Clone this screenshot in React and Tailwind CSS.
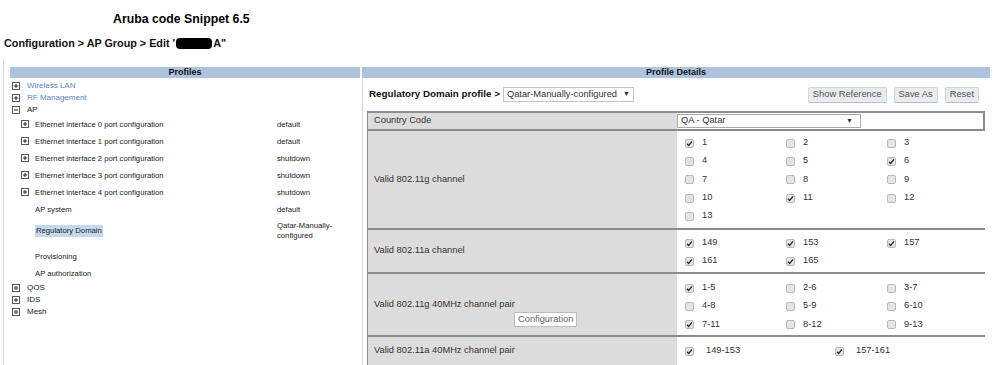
const ui = { fontFamily: '"Liberation Sans", Arial, sans-serif' };

function Expander({ open }) {
  return (
    <span className="inline-flex h-[8px] w-[8px] shrink-0 items-center justify-center border border-[#555] bg-white">
      <svg width="6" height="6" viewBox="0 0 6 6">
        <path d="M1 3h4" stroke="#222" strokeWidth="1" />
        {!open && <path d="M3 1v4" stroke="#222" strokeWidth="1" />}
      </svg>
    </span>
  );
}

function TopItem({ label, open, blue }) {
  return (
    <div className="flex h-[12px] items-center gap-[7px] pl-[2px] text-[8px]">
      <Expander open={open} />
      <span className={blue ? 'text-[#5b86c5]' : 'text-[#222]'}>{label}</span>
    </div>
  );
}

function SubItem({ label, value, expander, h = 'h-[17px]', highlight }) {
  return (
    <div className={`flex items-center ${h}`}>
      <div className="flex w-[267px] items-center pl-[11px]">
        <span className="w-[14px]">{expander && <Expander />}</span>
        <span className={highlight ? 'bg-[#c6d8ee] px-px text-[#222]' : 'text-[#222]'}>{label}</span>
      </div>
      <div className="leading-[10px] text-[#222]">{value}</div>
    </div>
  );
}

function Check({ on }) {
  return (
    <span className="inline-flex h-[9px] w-[9px] shrink-0 items-center justify-center rounded-[2px] border border-[#b9b9b9] bg-[#e4e4e4]">
      {on && (
        <svg width="7" height="7" viewBox="0 0 7 7">
          <path d="M1 3.8l1.6 1.7L6 1.3" fill="none" stroke="#2a2a2a" strokeWidth="1.3" />
        </svg>
      )}
    </span>
  );
}

function Grid({ items, cols = 'grid-cols-[101px_101px_101px]', gap = 'gap-[8px]' }) {
  return (
    <div className={`grid ${cols} pl-[8px]`}>
      {items.map(([label, on]) => (
        <div key={label} className={`flex h-[18.3px] items-center ${gap}`}>
          <Check on={on} />
          <span className="text-[#333]">{label}</span>
        </div>
      ))}
    </div>
  );
}

function Row({ label, h, pt = 'pt-[3px]', children, extra }) {
  return (
    <div className={`flex border-t-2 border-[#8c8c8c] ${h}`}>
      <div className="relative flex w-[309px] shrink-0 items-center bg-[#dcdcdc] pl-[6px] text-[#333]">
        {label}
        {extra}
      </div>
      <div className={`flex-1 bg-white ${pt}`}>{children}</div>
    </div>
  );
}

const gChannels = [
  ['1', true], ['2', false], ['3', false],
  ['4', false], ['5', false], ['6', true],
  ['7', false], ['8', false], ['9', false],
  ['10', false], ['11', true], ['12', false],
  ['13', false],
];
const aChannels = [['149', true], ['153', true], ['157', true], ['161', true], ['165', true]];
const gPairs = [
  ['1-5', true], ['2-6', false], ['3-7', false],
  ['4-8', false], ['5-9', false], ['6-10', false],
  ['7-11', true], ['8-12', false], ['9-13', false],
];
const aPairs = [['149-153', true], ['157-161', true]];

export default function App() {
  return (
    <div className="h-[365px] w-[998px] overflow-hidden bg-white" style={ui}>
      <div className="h-[31px] pl-[113px] pt-[11px] text-[12.3px] font-bold leading-[16px] text-black">
        Aruba code Snippet 6.5
      </div>
      <div className="flex h-[24px] items-center pl-[4px] text-[10.8px] font-bold text-[#111]">
        <span>Configuration &gt; AP Group &gt; Edit '</span>
        <span className="mx-px inline-block h-[11px] w-[36px] rounded-[4px] bg-black" />
        <span>A"</span>
      </div>

      <div className="h-[4px]" />
      <div className="ml-[3px] flex border-l border-[#d8d8d8] pt-[8px]">
        {/* Profiles tree */}
        <div className="w-[356px] shrink-0 pl-[6px] text-[7.7px]">
          <div className="flex h-[11px] items-center justify-center bg-[#adc3de] text-[9px] font-bold text-[#111]">
            Profiles
          </div>
          <div className="pt-[2px]">
            <TopItem label="Wireless LAN" blue />
            <TopItem label="RF Management" blue />
            <TopItem label="AP" open />
            <SubItem label="Ethernet interface 0 port configuration" value="default" expander />
            <SubItem label="Ethernet interface 1 port configuration" value="default" expander />
            <SubItem label="Ethernet interface 2 port configuration" value="shutdown" expander />
            <SubItem label="Ethernet interface 3 port configuration" value="shutdown" expander />
            <SubItem label="Ethernet interface 4 port configuration" value="shutdown" expander />
            <SubItem label="AP system" value="default" />
            <SubItem
              label="Regulatory Domain"
              value={<>Qatar-Manually-<br />configured</>}
              h="h-[26px]"
              highlight
            />
            <div className="h-[4px]" />
            <SubItem label="Provisioning" />
            <SubItem label="AP authorization" />
            <TopItem label="QOS" />
            <TopItem label="IDS" />
            <TopItem label="Mesh" />
          </div>
        </div>

        {/* Profile details */}
        <div className="ml-[2px] w-[628px] shrink-0 text-[9.3px]">
          <div className="flex h-[11px] items-center justify-center bg-[#adc3de] text-[9px] font-bold text-[#111]">
            Profile Details
          </div>
          <div className="border-l border-[#d8d8d8]">
            <div className="flex h-[33px] items-center pl-[6px] pr-[11px]">
              <span className="text-[9.8px] font-bold text-[#111]">Regulatory Domain profile &gt;</span>
              <span className="ml-[3px] flex h-[15px] w-[131px] items-center justify-between border border-[#c4c4c4] px-[3px] text-[#333]">
                Qatar-Manually-configured
                <span className="text-[7px]">▼</span>
              </span>
              <div className="ml-auto flex gap-[7px] text-[#555]">
                {['Show Reference', 'Save As', 'Reset'].map((b) => (
                  <span
                    key={b}
                    className="flex h-[16px] items-center rounded-[2px] border border-[#cdd6de] border-b-[#a9c3dd] bg-[#e9ebed] px-[4px]"
                  >
                    {b}
                  </span>
                ))}
              </div>
            </div>

            <div className="ml-[4px] w-[618px] border-r-2 border-l border-[#8c8c8c]">
              <Row label="Country Code" h="h-[18px]" pt="pt-[1px]">
                <span className="flex h-[14px] w-[184px] items-center justify-between border border-[#aaa] px-[3px] text-[#333]">
                  QA - Qatar
                  <span className="pr-[4px] text-[7px]">▼</span>
                </span>
              </Row>
              <Row label="Valid 802.11g channel" h="h-[99px]">
                <Grid items={gChannels} />
              </Row>
              <Row label="Valid 802.11a channel" h="h-[44px]" pt="pt-[4px]">
                <Grid items={aChannels} />
              </Row>
              <Row
                label="Valid 802.11g 40MHz channel pair"
                h="h-[63px]"
                pt="pt-[5px]"
                extra={
                  <span className="absolute left-[146px] top-[38px] flex h-[15px] items-center border border-[#bdbdbd] bg-white px-[3px] text-[#666]">
                    Configuration
                  </span>
                }
              >
                <Grid items={gPairs} />
              </Row>
              <Row label="Valid 802.11a 40MHz channel pair" h="h-[30px]" pt="pt-[5px]">
                <Grid items={aPairs} cols="grid-cols-[150px_150px]" gap="gap-[12px]" />
              </Row>
            </div>
          </div>
        </div>
      </div>
    </div>
  );
}
